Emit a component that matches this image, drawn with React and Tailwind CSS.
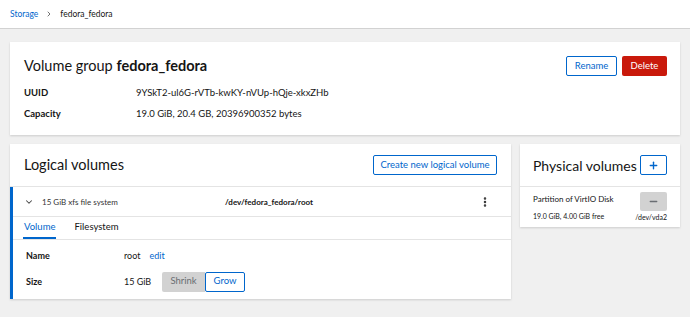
import { ChevronDown, ChevronRight, EllipsisVertical, Plus, Minus } from 'lucide-react'

const font = { fontFamily: 'Lato, "Liberation Sans", sans-serif' }

const Card = ({ className, children }) => (
  <div className={`bg-white shadow-[0_1px_2px_rgba(0,0,0,0.15)] ${className}`}>{children}</div>
)

export default function App() {
  return (
    <div className="w-[690px] h-[317px] bg-[#f0f0f0] overflow-hidden text-[#151515]" style={font}>
      <div className="h-[29px] bg-white border-b border-[#d2d2d2] flex items-center px-[10px] text-[8.5px] gap-[7px]">
        <span className="text-[#0066cc]">Storage</span>
        <ChevronRight size={8} strokeWidth={2.5} className="text-[#555]" />
        <span>fedora_fedora</span>
      </div>

      <div className="px-[10px] pt-[13px] flex flex-col gap-[9px]">
        <Card className="h-[93px] px-[14px] pt-[14px]">
          <div className="flex items-center justify-between h-[20px]">
            <h1 className="text-[14.5px] whitespace-nowrap">
              Volume group <b className="font-bold">fedora_fedora</b>
            </h1>
            <div className="flex gap-[5px] text-[9.5px] mr-[-1px]">
              <button className="h-[20px] w-[51px] border border-[#0066cc] rounded-[2px] text-[#0066cc]">Rename</button>
              <button className="h-[20px] w-[45px] bg-[#c9190b] rounded-[2px] text-white">Delete</button>
            </div>
          </div>
          <div className="mt-[7px] text-[9.5px]">
            <div className="flex h-[21px] items-center">
              <span className="w-[112px] font-bold">UUID</span>
              <span>9YSkT2-ul6G-rVTb-kwKY-nVUp-hQje-xkxZHb</span>
            </div>
            <div className="flex h-[21px] items-center">
              <span className="w-[112px] font-bold">Capacity</span>
              <span>19.0 GiB, 20.4 GB, 20396900352 bytes</span>
            </div>
          </div>
        </Card>

        <div className="flex gap-[9px] items-start">
          <Card className="w-[501px] h-[155px] shrink-0">
            <div className="h-[43px] flex items-center justify-between px-[14px] border-b border-[#e4e4e4]">
              <h2 className="text-[14.5px]">Logical volumes</h2>
              <button className="h-[20px] w-[124px] border border-[#0066cc] rounded-[2px] text-[#0066cc] text-[9.5px]">
                Create new logical volume
              </button>
            </div>
            <div className="border-l-[3px] border-[#0066cc] h-[112px]">
              <div className="h-[30px] flex items-center border-b border-[#e4e4e4] text-[8px]">
                <ChevronDown size={10} strokeWidth={2.5} className="ml-[11px] text-[#444]" />
                <span className="ml-[8px] w-[183px] text-[#333]">15 GiB xfs file system</span>
                <span className="font-bold">/dev/fedora_fedora/root</span>
                <EllipsisVertical size={12} strokeWidth={3} className="ml-auto mr-[20px] text-[#333]" />
              </div>
              <div className="h-[23px] flex items-end border-b border-[#e4e4e4] text-[9.5px] px-[10px] gap-[18px]">
                <span className="text-[#0066cc] border-b-2 border-[#0066cc] pb-[3px] px-[1px]">Volume</span>
                <span className="pb-[5px]">Filesystem</span>
              </div>
              <div className="text-[9px] pt-[5px] pl-[13px]">
                <div className="flex items-center h-[21px]">
                  <span className="w-[98px] font-bold">Name</span>
                  <span>root</span>
                  <span className="ml-[9px] text-[#0066cc]">edit</span>
                </div>
                <div className="flex items-center h-[25px] mt-[3px]">
                  <span className="w-[98px] font-bold">Size</span>
                  <span className="w-[38px]">15 GiB</span>
                  <button className="h-[20px] w-[43px] bg-[#d2d2d2] text-[#6a6e73] rounded-l-[2px] text-[9.5px]">Shrink</button>
                  <button className="h-[20px] w-[40px] border border-[#0066cc] text-[#0066cc] rounded-[2px] text-[9.5px]">Grow</button>
                </div>
              </div>
            </div>
          </Card>

          <Card className="w-[160px] h-[83px] shrink-0">
            <div className="h-[43px] flex items-center justify-between pl-[13px] pr-[13px] border-b border-[#e4e4e4]">
              <h2 className="text-[14px] whitespace-nowrap">Physical volumes</h2>
              <button className="h-[20px] w-[27px] border border-[#0066cc] rounded-[2px] text-[#0066cc] flex items-center justify-center shrink-0">
                <Plus size={11} strokeWidth={3} />
              </button>
            </div>
            <div className="h-[40px] flex items-center justify-between px-[13px]">
              <div className="flex flex-col gap-[6px] pt-[1px]">
                <span className="text-[8px]">Partition of VirtIO Disk</span>
                <span className="text-[7px]">19.0 GiB, 4.00 GiB free</span>
              </div>
              <div className="flex flex-col items-end gap-[1px]">
                <button className="h-[19px] w-[27px] bg-[#d2d2d2] rounded-[2px] text-[#6a6e73] flex items-center justify-center">
                  <Minus size={11} strokeWidth={3} />
                </button>
                <span className="text-[7px]">/dev/vda2</span>
              </div>
            </div>
          </Card>
        </div>
      </div>
    </div>
  )
}
